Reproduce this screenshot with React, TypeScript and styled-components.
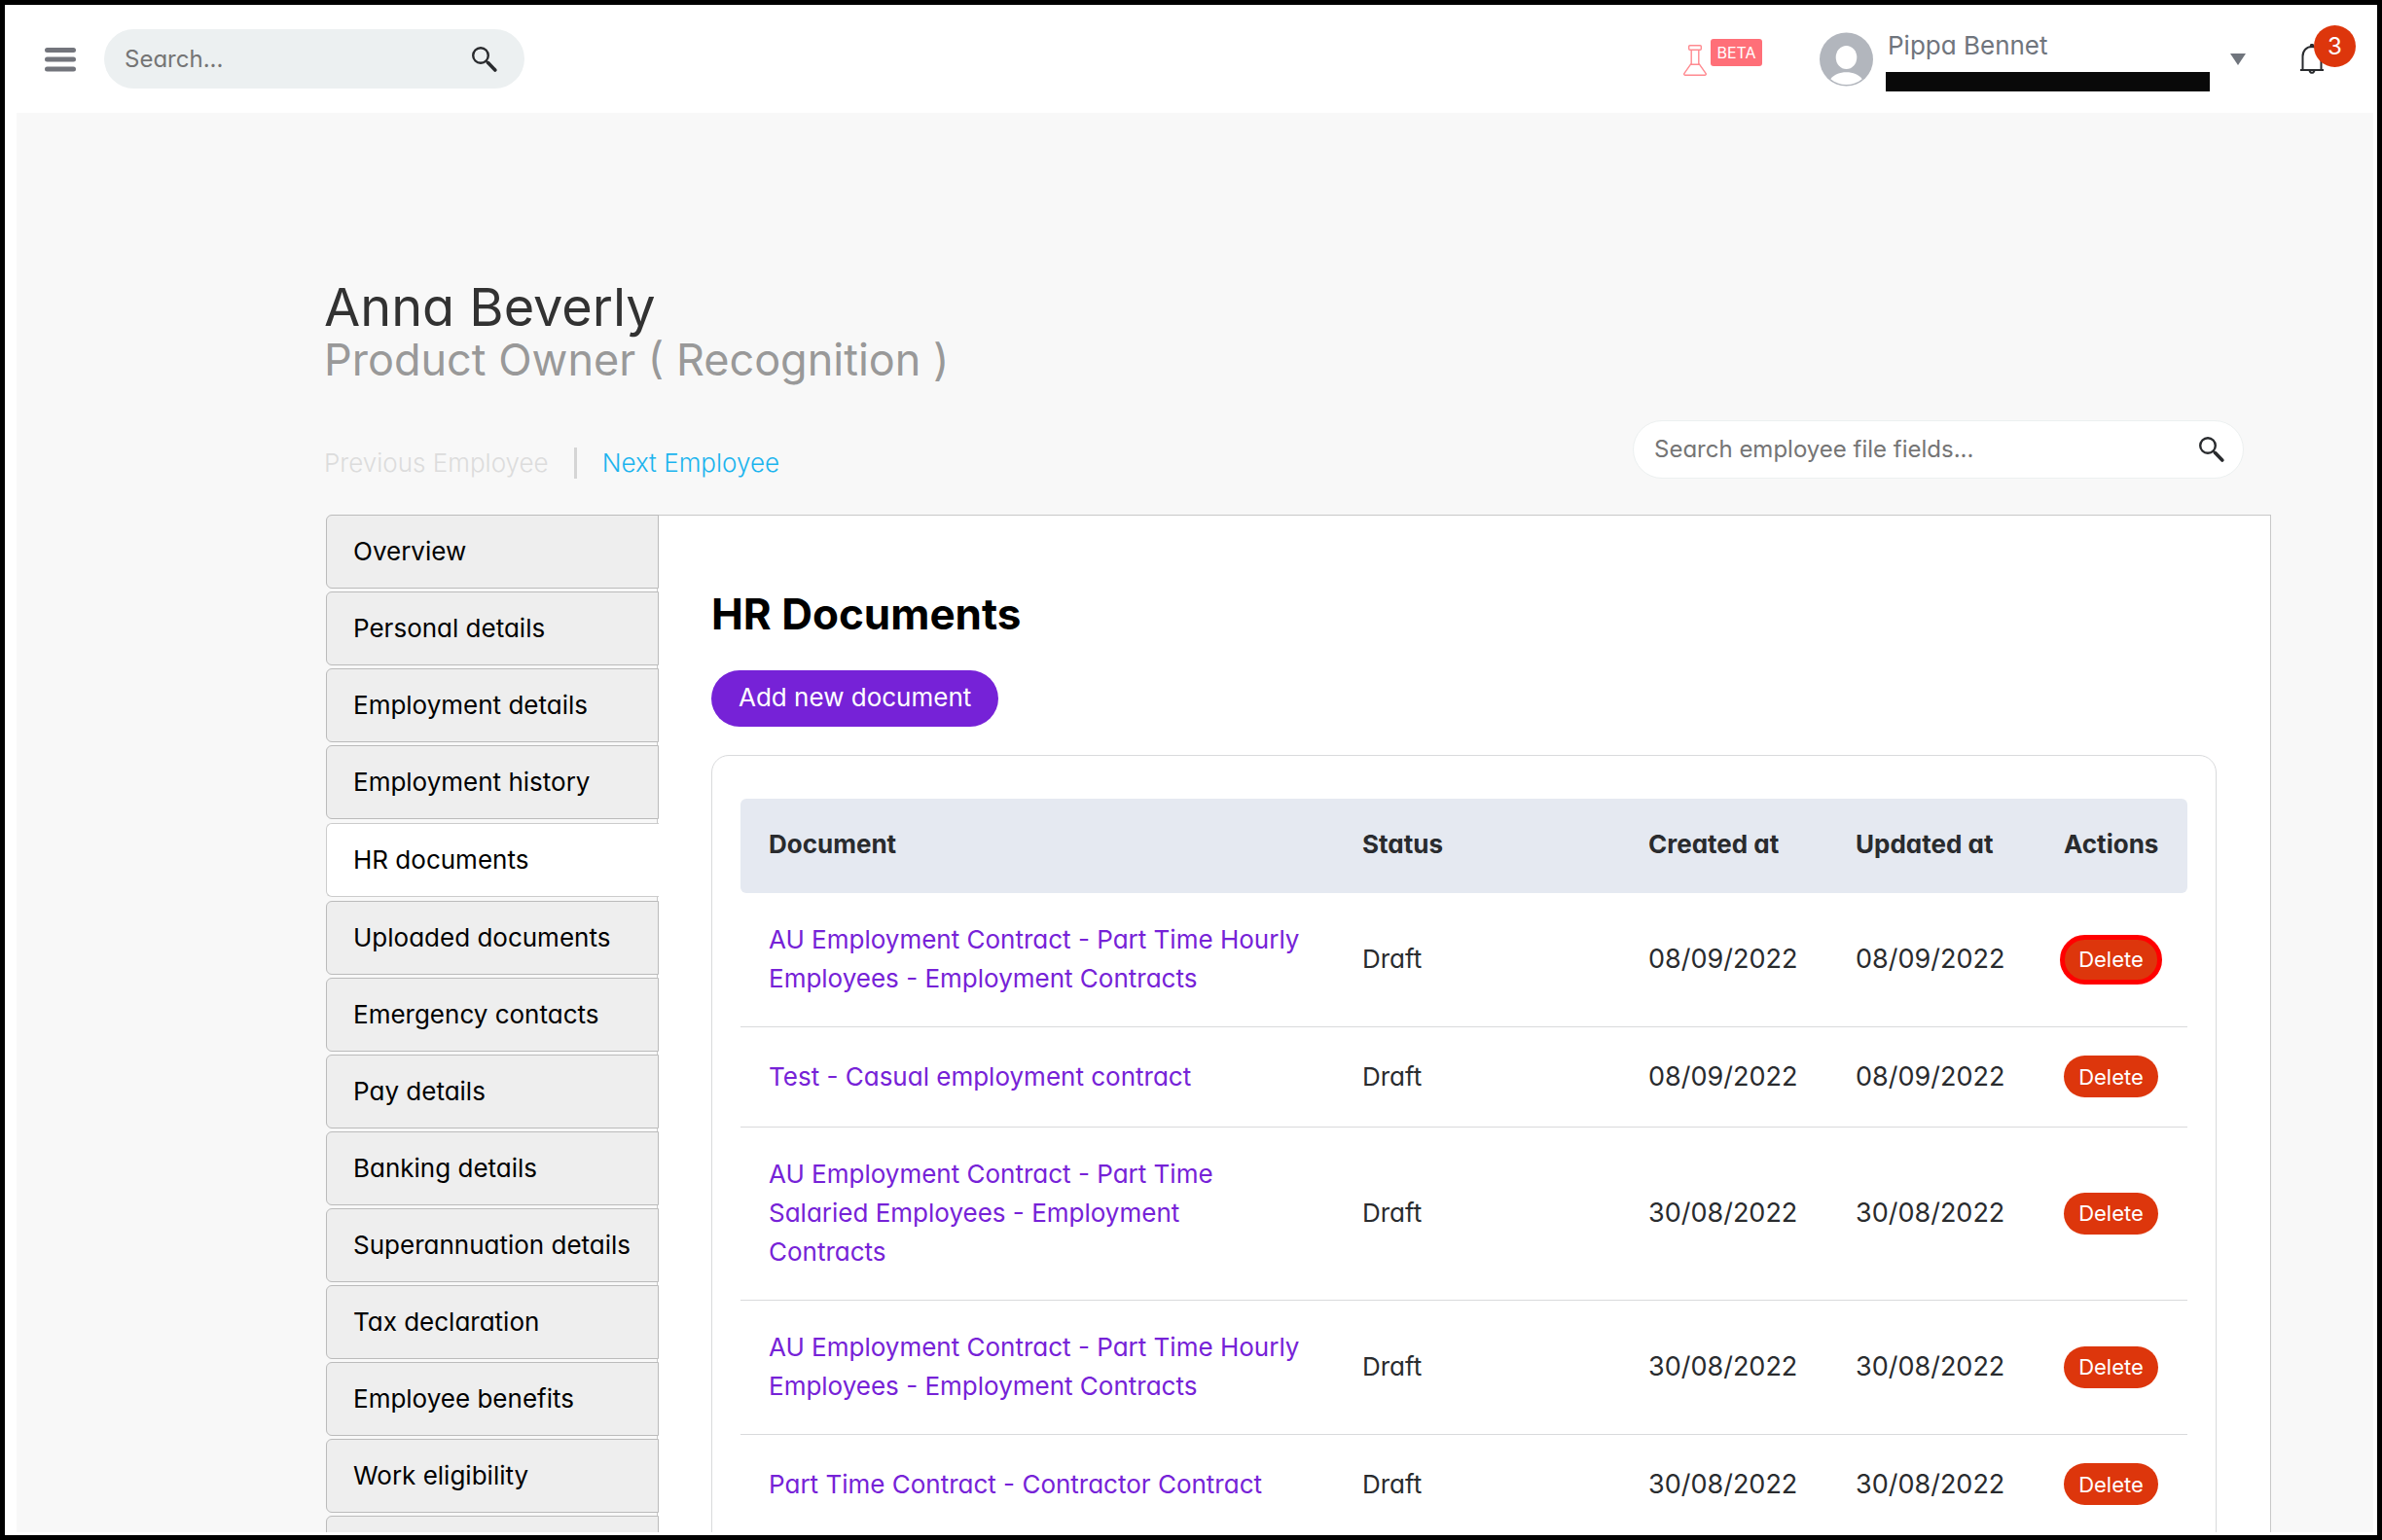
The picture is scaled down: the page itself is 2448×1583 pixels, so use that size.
import React from "react";
import styled, { createGlobalStyle, css } from "styled-components";

const GlobalStyle = createGlobalStyle`
  *, *::before, *::after { box-sizing: border-box; }
  body {
    margin: 0;
    font-family: Inter, "Liberation Sans", sans-serif;
    font-feature-settings: "cv11";
    font-size: 26px;
    line-height: 40px;
    color: #292b2e;
    background: #fff;
  }
  button, input { font: inherit; font-feature-settings: inherit; }
  a { text-decoration: none; }
`;

const Frame = styled.div`
  display: flex;
  flex-direction: column;
  height: 100vh;
  border: 5px solid #000;
  background: #fff;
  overflow: hidden;
`;

const TopBar = styled.header`
  flex: none;
  display: flex;
  align-items: center;
  justify-content: space-between;
  height: 111px;
  padding: 0 55px 0 41px;
`;

const BarGroup = styled.div<{ $gap: number }>`
  display: flex;
  align-items: center;
  gap: ${(p) => p.$gap}px;
`;

const IconButton = styled.button`
  display: flex;
  align-items: center;
  justify-content: center;
  padding: 0;
  border: 0;
  background: none;
  color: #292b2e;
  cursor: pointer;
`;

const SearchBox = styled.form<{ $width: number; $outlined?: boolean }>`
  display: flex;
  align-items: center;
  width: ${(p) => p.$width}px;
  height: ${(p) => (p.$outlined ? 60 : 61)}px;
  padding: 0 ${(p) => (p.$outlined ? 19 : 28)}px 0 21px;
  border-radius: 31px;
  border: ${(p) => (p.$outlined ? "1px solid #ecf0f0" : "0")};
  background: ${(p) => (p.$outlined ? "#fff" : "#ecf0f1")};

  input {
    flex: 1;
    min-width: 0;
    padding: 0;
    border: 0;
    outline: 0;
    background: none;
    font-size: 24px;
    line-height: 32px;
    color: #292b2e;
  }
  input::placeholder { color: #757575; opacity: 1; }
`;

const Beta = styled.div`
  display: flex;
  align-items: flex-start;
  gap: 4px;
  height: 42px;
  margin-right: 59px;

  svg { margin-top: 6px; }
`;

const BetaTag = styled.span`
  width: 53px;
  border-radius: 3px;
  background: #ff6f78;
  color: #fff;
  font-size: 16px;
  line-height: 28px;
  text-align: center;
`;

const UserMenu = styled.button`
  display: flex;
  align-items: center;
  padding: 0;
  border: 0;
  background: none;
  color: #70757d;
  text-align: left;
  cursor: pointer;
`;

const UserText = styled.span`
  display: flex;
  flex-direction: column;
  gap: 8px;
  width: 333px;
  margin: 0 21px 0 13px;
`;

const UserName = styled.span`
  padding-left: 2px;
  font-size: 26px;
  line-height: 38px;
`;

const Redaction = styled.span`
  height: 20px;
  background: #090909;
`;

const Bell = styled.button`
  position: relative;
  width: 24px;
  height: 32px;
  margin-left: 56px;
  padding: 0;
  border: 0;
  background: none;
  color: #292b2e;

  svg { display: block; }
`;

const BellCount = styled.span`
  position: absolute;
  left: 14px;
  top: -19px;
  width: 43px;
  height: 43px;
  border-radius: 50%;
  background: #dd360c;
  color: #fff;
  font-size: 24px;
  line-height: 43px;
  text-align: center;
`;

const Main = styled.main`
  flex: 1;
  min-height: 0;
  margin: 0 4px 3px 12px;
  padding: 172px 105px 0 318px;
  background: #f8f8f8;
  overflow: hidden;
`;

const Intro = styled.div`
  margin-left: -2px;
`;

const Name = styled.h1`
  margin: 0;
  font-size: 54px;
  font-weight: 400;
  line-height: 56px;
  color: #323232;
`;

const Role = styled.p`
  margin: 0;
  font-size: 45px;
  line-height: 52px;
  color: #999;
`;

const ToolRow = styled.div`
  display: flex;
  align-items: flex-end;
  justify-content: space-between;
  margin-top: 36px;
  padding-right: 28px;
`;

const Pager = styled.nav`
  display: flex;
  align-items: center;
  font-weight: 300;
  line-height: 32px;
`;

const PageLink = styled.a<{ $disabled?: boolean }>`
  color: ${(p) => (p.$disabled ? "#dcdcdc" : "#1bb4ee")};
`;

const Divider = styled.span`
  width: 3px;
  height: 32px;
  margin: 0 26px;
  background: #d5d5d5;
`;

const Columns = styled.div`
  display: flex;
  align-items: flex-start;
  margin-top: 37px;
`;

const Tabs = styled.ul`
  position: relative;
  z-index: 1;
  flex: none;
  display: flex;
  flex-direction: column;
  gap: 3px;
  width: 342px;
  margin: 0 -2px 0 0;
  padding: 0;
  list-style: none;
`;

const Tab = styled.a<{ $active?: boolean }>`
  display: block;
  height: 76px;
  padding: 17px 0 0 27px;
  border: 1px solid #bbb;
  border-radius: 6px 0 0 6px;
  background: #eee;
  color: #000;

  ${(p) =>
    p.$active &&
    css`
      margin: 1px 0;
      border-color: #ccc;
      border-right: 0;
      background: #fff;
    `}
`;

const Panel = styled.section`
  flex: 1;
  min-width: 0;
  padding: 75px 55px 60px;
  border: 1px solid #c8c8c8;
  background: #fff;
`;

const PanelTitle = styled.h2`
  margin: 0;
  font-size: 44px;
  font-weight: 700;
  line-height: 52px;
  color: #000;
`;

const AddButton = styled.button`
  display: block;
  margin: 32px 0 29px;
  padding: 8px 28px 10px;
  border: 0;
  border-radius: 29px;
  background: #7622d7;
  color: #fff;
  line-height: 40px;
  cursor: pointer;
`;

const Card = styled.div`
  padding: 44px 29px;
  border: 1px solid #d9dadc;
  border-radius: 18px;
`;

const Table = styled.table`
  width: 100%;
  table-layout: fixed;
  border-collapse: separate;
  border-spacing: 0;
`;

const HeadCell = styled.th<{ $width: string }>`
  width: ${(p) => p.$width};
  height: 97px;
  padding: 0 0 4px 29px;
  background: #e5e9f1;
  font-weight: 700;
  text-align: left;

  &:first-child { border-radius: 6px 0 0 6px; }
  &:last-child { border-radius: 0 6px 6px 0; }
`;

const Cell = styled.td<{ $date?: boolean }>`
  padding: 28px 0 29px 29px;
  border-bottom: 1px solid #d9dadc;
  font-size: ${(p) => (p.$date ? 27 : 26)}px;
  white-space: nowrap;

  &:first-child {
    padding-right: 33px;
    white-space: normal;
  }
`;

const DocLink = styled.a`
  color: #7622d7;
`;

const DeleteButton = styled.button<{ $marked?: boolean }>`
  display: block;
  width: 97px;
  height: 43px;
  margin: 1px 0;
  padding: 0;
  border: 0;
  border-radius: 22px;
  background: #dd360c;
  color: #fff;
  font-size: 22px;
  line-height: 40px;
  cursor: pointer;
  ${(p) =>
    p.$marked &&
    css`
      outline: 5px solid #f00;
      outline-offset: -1px;
    `}
`;

const SearchIcon = () => (
  <svg width="26" height="26" viewBox="0 0 26 26" fill="none" stroke="currentColor" aria-hidden="true">
    <circle cx="9" cy="9" r="7.8" strokeWidth="2.4" />
    <path d="M14.8 14.8l2 2" strokeWidth="2.4" />
    <path d="M16.6 16.6l7.2 7.4" strokeWidth="3.6" strokeLinecap="round" />
  </svg>
);

const MenuIcon = () => (
  <svg width="32" height="26" viewBox="0 0 32 26" stroke="#73757c" strokeWidth="5" strokeLinecap="round" aria-hidden="true">
    <path d="M2.5 3.5h27M2.5 13h27M2.500 23h27" />
  </svg>
);

const FlaskIcon = () => (
  <svg width="24" height="32" viewBox="0 0 24 32" fill="none" stroke="#ff8a90" strokeWidth="1.4" strokeLinejoin="round" aria-hidden="true">
    <rect x="5.7" y="0.8" width="12.6" height="4.4" rx="1" />
    <path d="M8.2 5.2v14L1 29.4c-.6 1 0 1.900 1 1.900h20c1 0 1.600-.9 1-1.900L15.800 19.200v-14M7.300 20.300h9.400" />
  </svg>
);

const Avatar = () => (
  <svg width="55" height="56" viewBox="0 0 56 56" aria-hidden="true">
    <circle cx="28" cy="28" r="28" fill="#b2b6bd" />
    <ellipse cx="28" cy="26" rx="11" ry="12.300" fill="#fff" />
    <path d="M11.500 48.500C15 44 21 41.500 28 41.500s13 2.500 16.500 7C40 52.300 34.300 54.400 28 54.400s-12-2.100-16.500-5.900z" fill="#fff" />
  </svg>
);

const CaretIcon = () => (
  <svg width="16" height="12" viewBox="0 0 16 12" aria-hidden="true">
    <path d="M0 0h16L8 12z" fill="#70757d" />
  </svg>
);

const BellIcon = () => (
  <svg width="24" height="32" viewBox="0 0 24 32" fill="none" stroke="currentColor" strokeWidth="2" aria-hidden="true">
    <path d="M0 27h24M2.500 27V13C2.500 7 6.500 3 12 3s9.500 4 9.500 10v14" />
    <path d="M9.500 27.500a2.600 3.200 0 0 0 5 0" />
    <circle cx="12" cy="2" r="1.200" fill="currentColor" />
  </svg>
);

const tabs = [
  "Overview",
  "Personal details",
  "Employment details",
  "Employment history",
  "HR documents",
  "Uploaded documents",
  "Emergency contacts",
  "Pay details",
  "Banking details",
  "Superannuation details",
  "Tax declaration",
  "Employee benefits",
  "Work eligibility",
  "",
];

const columns = [
  { label: "Document", width: "auto" },
  { label: "Status", width: "294px" },
  { label: "Created at", width: "213px" },
  { label: "Updated at", width: "214px" },
  { label: "Actions", width: "156px" },
];

const documents = [
  { title: "AU Employment Contract - Part Time Hourly Employees - Employment Contracts", date: "08/09/2022", marked: true },
  { title: "Test - Casual employment contract", date: "08/09/2022" },
  { title: "AU Employment Contract - Part Time Salaried Employees - Employment Contracts", date: "30/08/2022" },
  { title: "AU Employment Contract - Part Time Hourly Employees - Employment Contracts", date: "30/08/2022" },
  { title: "Part Time Contract - Contractor Contract", date: "30/08/2022" },
];

function Search({ label, width, outlined }: { label: string; width: number; outlined?: boolean }) {
  return (
    <SearchBox $width={width} $outlined={outlined} role="search" onSubmit={(e) => e.preventDefault()}>
      <input type="text" placeholder={label} aria-label={label} />
      <IconButton type="submit" aria-label="Search">
        <SearchIcon />
      </IconButton>
    </SearchBox>
  );
}

export default function App() {
  return (
    <>
      <GlobalStyle />
      <Frame>
        <TopBar>
          <BarGroup $gap={29}>
            <IconButton type="button" aria-label="Menu">
              <MenuIcon />
            </IconButton>
            <Search label="Search..." width={432} />
          </BarGroup>
          <BarGroup $gap={0}>
            <Beta>
              <FlaskIcon />
              <BetaTag>BETA</BetaTag>
            </Beta>
            <UserMenu type="button">
              <Avatar />
              <UserText>
                <UserName>Pippa Bennet</UserName>
                <Redaction />
              </UserText>
              <CaretIcon />
            </UserMenu>
            <Bell type="button" aria-label="Notifications">
              <BellIcon />
              <BellCount>3</BellCount>
            </Bell>
          </BarGroup>
        </TopBar>
        <Main>
          <Intro>
            <Name>Anna Beverly</Name>
            <Role>Product Owner ( Recognition )</Role>
            <ToolRow>
              <Pager>
                <PageLink $disabled aria-disabled="true">Previous Employee</PageLink>
                <Divider />
                <PageLink href="#next">Next Employee</PageLink>
              </Pager>
              <Search label="Search employee file fields..." width={628} outlined />
            </ToolRow>
          </Intro>
          <Columns>
            <Tabs>
              {tabs.map((label, i) => (
                <li key={i}>
                  <Tab href="#tab" $active={label === "HR documents"}>{label}</Tab>
                </li>
              ))}
            </Tabs>
            <Panel>
              <PanelTitle>HR Documents</PanelTitle>
              <AddButton type="button">Add new document</AddButton>
              <Card>
                <Table>
                  <thead>
                    <tr>
                      {columns.map((c) => (
                        <HeadCell key={c.label} $width={c.width}>{c.label}</HeadCell>
                      ))}
                    </tr>
                  </thead>
                  <tbody>
                    {documents.map((d, i) => (
                      <tr key={i}>
                        <Cell><DocLink href="#document">{d.title}</DocLink></Cell>
                        <Cell>Draft</Cell>
                        <Cell $date>{d.date}</Cell>
                        <Cell $date>{d.date}</Cell>
                        <Cell><DeleteButton type="button" $marked={d.marked}>Delete</DeleteButton></Cell>
                      </tr>
                    ))}
                  </tbody>
                </Table>
              </Card>
            </Panel>
          </Columns>
        </Main>
      </Frame>
    </>
  );
}
